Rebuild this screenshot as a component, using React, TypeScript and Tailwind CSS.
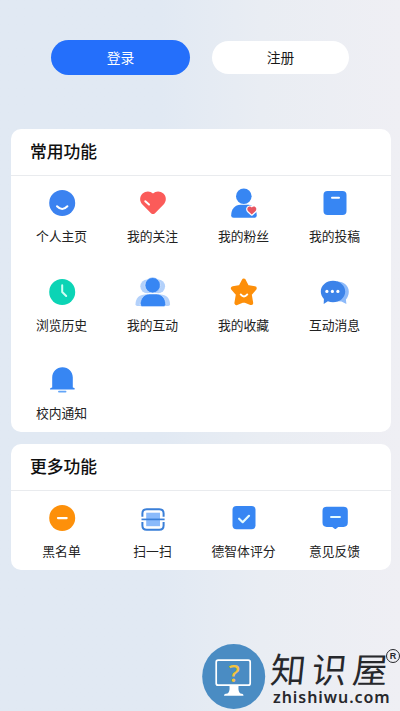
import React from "react";

interface MenuItem {
  label: string;
  icon: React.ReactNode;
}

interface MenuCardProps {
  title: string;
  items: MenuItem[];
  className?: string;
}

const Icon: React.FC<{ children: React.ReactNode }> = ({ children }) => (
  <svg
    width="36"
    height="36"
    viewBox="0 0 36 36"
    fill="none"
    strokeLinecap="round"
    strokeLinejoin="round"
  >
    {children}
  </svg>
);

const commonItems: MenuItem[] = [
  {
    label: "个人主页",
    icon: (
      <Icon>
        <circle cx="18.2" cy="18" r="13" fill="#3b82f0" />
        <path d="M13 21.2Q18.2 26.6 23.4 21.2" stroke="#fff" strokeWidth="2" />
      </Icon>
    ),
  },
  {
    label: "我的关注",
    icon: (
      <Icon>
        <path
          d="M18 8.6C15.2 5.6 10.6 5.7 7.6 8.6C4.4 11.7 4.4 16.4 7.4 19.5L16 28.2Q18 30 20 28.2L28.6 19.5C31.6 16.4 31.6 11.7 28.4 8.6C25.4 5.7 20.8 5.6 18 8.6Z"
          fill="#fb5b59"
        />
        <path d="M10.3 16.2L14 19.6" stroke="#fff" strokeWidth="2" />
      </Icon>
    ),
  },
  {
    label: "我的粉丝",
    icon: (
      <Icon>
        <circle cx="17.8" cy="11.3" r="7.8" fill="#3786f3" />
        <path
          d="M5.2 30.2C5.2 24.5 9 19.8 14.5 19.8H21.5C27 19.8 30.7 24.5 30.7 30.2Q30.7 32.7 28.2 32.7H7.7Q5.2 32.7 5.2 30.2Z"
          fill="#3786f3"
        />
        <path
          d="M25.8 22.6C24.5 21 22.2 21.4 21.5 23.1C21 24.5 21.5 25.6 22.5 26.6L25.8 29.6L29.1 26.6C30.1 25.6 30.6 24.5 30.1 23.1C29.4 21.4 27.1 21 25.8 22.6Z"
          stroke="#fff"
          strokeWidth="2.4"
        />
        <path
          d="M25.8 22.6C24.5 21 22.2 21.4 21.5 23.1C21 24.5 21.5 25.6 22.5 26.6L25.8 29.6L29.1 26.6C30.1 25.6 30.6 24.5 30.1 23.1C29.4 21.4 27.1 21 25.8 22.6Z"
          fill="#e75561"
        />
      </Icon>
    ),
  },
  {
    label: "我的投稿",
    icon: (
      <Icon>
        <rect x="6.5" y="6" width="23" height="24" rx="4" fill="#3786f3" />
        <path d="M15 12.8H22" stroke="#fff" strokeWidth="2" />
      </Icon>
    ),
  },
  {
    label: "浏览历史",
    icon: (
      <Icon>
        <circle cx="18.2" cy="18" r="13" fill="#0bd4b5" />
        <path d="M18.2 11.3V18L22.2 22" stroke="#cffff4" strokeWidth="2" />
      </Icon>
    ),
  },
  {
    label: "我的互动",
    icon: (
      <Icon>
        <g fill="#b3d1fb">
          <circle cx="12.2" cy="12.3" r="6.9" />
          <circle cx="23.2" cy="12.3" r="6.9" />
          <path d="M.5 30.2C.5 24 4.5 20.4 10 20.4H25.5C31 20.4 35 24 35 30.2Q35 32 33.2 32H2.3Q.5 32 .5 30.2Z" />
        </g>
        <circle cx="17.7" cy="11.2" r="7.7" fill="#3786f3" stroke="#eaf2fe" strokeWidth=".5" />
        <path
          d="M5.2 30.5C5.2 24.5 9 20 14.5 20H21.4C26.9 20 30.7 24.5 30.7 30.5Q30.7 32.6 28.7 32.6H7.2Q5.2 32.6 5.2 30.5Z"
          fill="#3786f3"
          stroke="#eaf2fe"
          strokeWidth=".5"
        />
      </Icon>
    ),
  },
  {
    label: "我的收藏",
    icon: (
      <Icon>
        <path
          d="M17.8 6.6L21.2 13.1L28.6 14.3L23.6 20L25.1 29L17.8 26L10.5 29L12 20L7 14.3L14.4 13.1Z"
          fill="#fd8f0a"
          stroke="#fd8f0a"
          strokeWidth="4.2"
        />
        <path d="M14.7 20.4Q18 24.6 21.3 20.4" stroke="#fff" strokeWidth="1.9" />
      </Icon>
    ),
  },
  {
    label: "互动消息",
    icon: (
      <Icon>
        <path
          d="M20 7.6C27.3 7.6 31.8 12 31.8 17.8C31.8 21 30.6 23.6 28.9 25.5L29.4 30L24.5 27.6L16 27Z"
          fill="#8dbafa"
        />
        <path
          d="M16 6.7C22.8 6.7 28.2 11.5 28.2 17.5C28.2 23.5 22.8 28.3 16 28.3C14.2 28.3 12.4 28 10.9 27.3L6.7 30L6.9 24.9C5 23 3.8 20.4 3.8 17.5C3.8 11.5 9.2 6.7 16 6.7Z"
          fill="#3c83e9"
        />
        <g fill="#fff">
          <circle cx="9.9" cy="17.4" r="1.6" />
          <circle cx="15.4" cy="17.4" r="1.6" />
          <circle cx="20.9" cy="17.4" r="1.6" />
        </g>
      </Icon>
    ),
  },
  {
    label: "校内通知",
    icon: (
      <Icon>
        <path
          d="M8.2 25.5V15.5C8.2 9.7 12.6 5.2 18.5 5.2S28.8 9.7 28.8 15.5V25.5L30.4 25.9Q31.6 27.5 29.9 27.5H6.9Q5.2 27.5 6.6 25.9Z"
          fill="#3786f3"
        />
        <path d="M14.9 29.6H21.6" stroke="#62a5f8" strokeWidth="1.7" />
      </Icon>
    ),
  },
];

const moreItems: MenuItem[] = [
  {
    label: "黑名单",
    icon: (
      <Icon>
        <circle cx="18.2" cy="18" r="13" fill="#fd900a" />
        <path d="M13.9 18.1H22.7" stroke="#fff" strokeWidth="2.1" />
      </Icon>
    ),
  },
  {
    label: "扫一扫",
    icon: (
      <Icon>
        <rect x="11.2" y="12.7" width="13.8" height="13.5" fill="#8abafb" />
        <path
          d="M7.4 16.8V13.5Q7.4 9.2 11.7 9.2H24.3Q28.6 9.2 28.6 13.5V16.8M7.4 21.9V25.5Q7.4 29.8 11.7 29.8H24.3Q28.6 29.8 28.6 25.5V21.9"
          stroke="#3a7fd8"
          strokeWidth="2"
          strokeLinecap="butt"
        />
        <path d="M6.5 19.4H29.6" stroke="#3a7fd8" strokeWidth="1.7" strokeLinecap="butt" />
      </Icon>
    ),
  },
  {
    label: "德智体评分",
    icon: (
      <Icon>
        <rect x="6.5" y="6" width="23" height="23.3" rx="4" fill="#3786f3" />
        <path d="M13.1 18.7L16.7 22.2L23 15.8" stroke="#e4fbff" strokeWidth="2.2" />
      </Icon>
    ),
  },
  {
    label: "意见反馈",
    icon: (
      <Icon>
        <path
          d="M9.7 6.7H26.5Q30.8 6.7 30.8 11V22.6Q30.8 26.9 26.5 26.9H21.2L19.1 28.8Q18.4 29.3 17.6 28.8L15.3 26.9H9.7Q5.5 26.9 5.5 22.6V11Q5.5 6.7 9.7 6.7Z"
          fill="#3786f3"
        />
        <path d="M14 17H23" stroke="#e4fbff" strokeWidth="1.9" />
      </Icon>
    ),
  },
];

const MenuCard: React.FC<MenuCardProps> = ({ title, items, className }) => {
  return (
    <section className={`mx-auto w-[380px] rounded-[10px] bg-white ${className}`}>
      <h2 className="h-[47px] border-b border-[#e9ebee] pl-[19px] text-[16.8px] leading-[44px] font-medium text-[#101010]">
        {title}
      </h2>
      <div className="grid grid-cols-4 gap-y-[21.7px] pt-[9px] pr-[11px] pl-[5px]">
        {items.map((item) => (
          <div key={item.label} className="flex h-[67px] flex-col items-center">
            {item.icon}
            <span className="mt-[5px] text-[12.8px] leading-5 whitespace-nowrap text-[#222]">
              {item.label}
            </span>
          </div>
        ))}
      </div>
    </section>
  );
};

const SiteMark: React.FC = () => {
  return (
    <div className="absolute top-[644px] left-[202px] flex w-[198px]">
      <svg width="64" height="66" viewBox="0 0 64 66" fill="none">
        <ellipse cx="31.7" cy="32.5" rx="31.5" ry="32.5" fill="#4a8cc3" />
        <rect x="14.2" y="16.2" width="34" height="25" rx="2" stroke="#fff" strokeWidth="1.7" />
        <path
          d="M27.5 42H36.5Q36 48 38.5 49.5Q41.5 49.5 41.5 51.8H22Q22 49.5 25.5 49.5Q28 48 27.5 42Z"
          fill="#fff"
        />
        <text
          x="32.2"
          y="38"
          textAnchor="middle"
          fontSize="24"
          fontWeight="600"
          fontFamily="'Open Sans', sans-serif"
          fill="#f3c33d"
        >
          ?
        </text>
      </svg>
      <div className="ml-[5px] text-[#27282c]">
        <div className="flex h-[44px] gap-[6px] pt-[6px] text-[35px] leading-[35px]">
          <span className="-skew-x-6">知</span>
          <span className="-skew-x-6">识</span>
          <span className="-skew-x-6">屋</span>
        </div>
        <div className="ml-[2px] font-['Noto_Sans',sans-serif] text-[16px] leading-[18px] font-semibold tracking-[0.95px]">
          zhishiwu.com
        </div>
      </div>
      <span className="absolute top-[5px] left-[184px] flex size-[14px] items-center justify-center rounded-full border-[1.5px] border-[#27282c] font-['Liberation_Sans',sans-serif] text-[9px] leading-none font-bold text-[#27282c]">
        R
      </span>
    </div>
  );
};

const App: React.FC = () => {
  return (
    <div className="relative h-[711px] w-[400px] overflow-hidden bg-linear-to-r from-[#e1e9f3] from-40% via-[#e9edf3] via-65% to-[#efeff4] pl-[2px] font-['Noto_Sans_CJK_SC',sans-serif]">
      {/* Login / register */}
      <div className="flex h-[129px] items-start pt-10 pl-[49px]">
        <button className="h-[35px] w-[139px] rounded-full bg-[#246ffb] pb-px text-[13.8px] text-white">
          登录
        </button>
        <button className="mt-px ml-[22px] h-[33px] w-[137px] rounded-full bg-white pb-px text-[13.8px] text-[#181818]">
          注册
        </button>
      </div>
      <MenuCard title="常用功能" items={commonItems} className="h-[303px]" />
      <MenuCard title="更多功能" items={moreItems} className="mt-3 h-[126px]" />
      <SiteMark />
    </div>
  );
};

export default App;
